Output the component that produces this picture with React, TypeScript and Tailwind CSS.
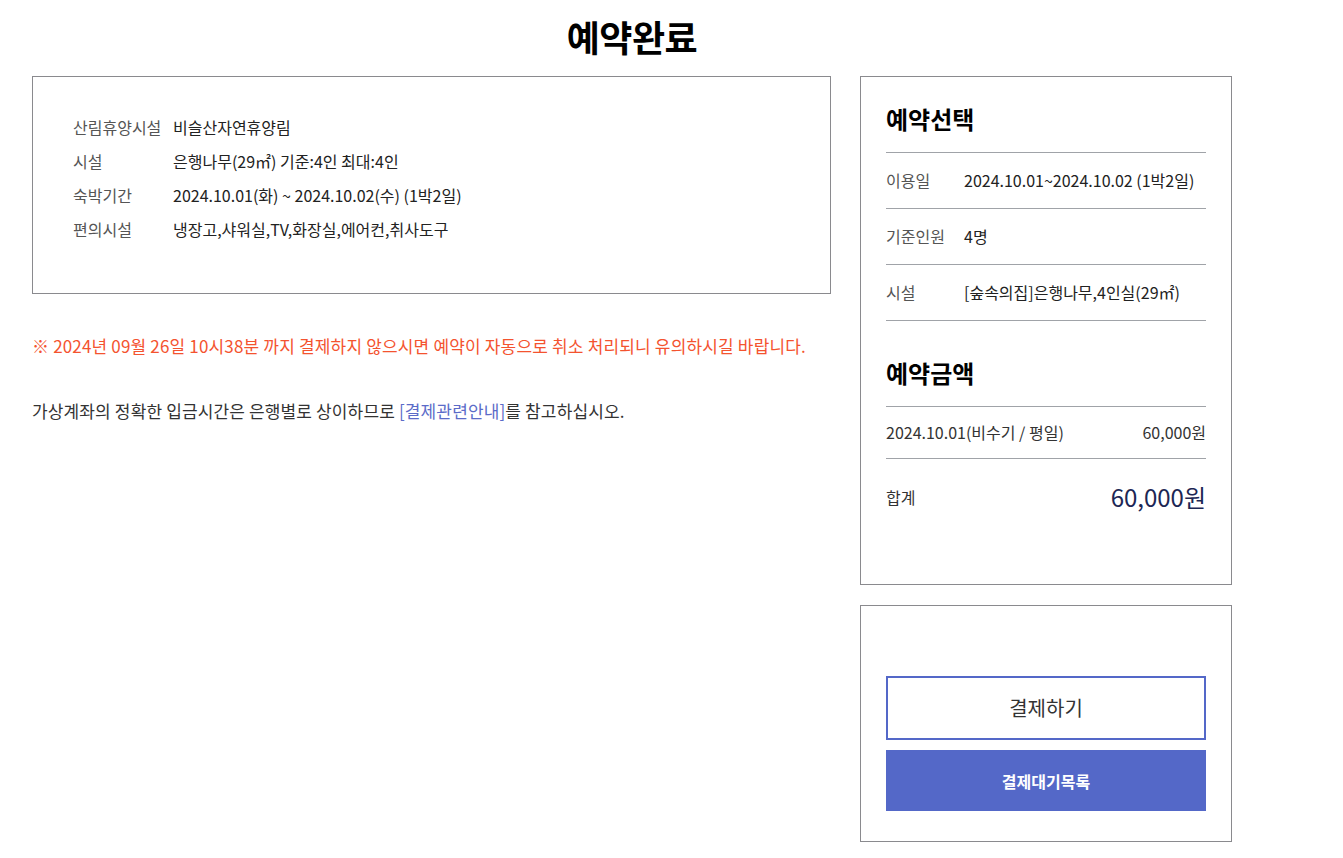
import React from "react";

const font = { fontFamily: '"Noto Sans CJK KR", "Noto Sans", sans-serif' };

export default function App() {
  return (
    <div className="min-h-[858px] bg-white text-[#222]" style={font}>
      <div className="w-[1200px] ml-[32px]">
        <h1 className="text-center text-[36px] font-bold text-black leading-none pt-[18px] pb-[22px] tracking-[-0.5px]">
          예약완료
        </h1>
        <div className="flex gap-[29px] items-start">
          {/* Left */}
          <div className="w-[799px]">
            <div className="border border-[#8a8a8e] h-[218px] pl-[40px] pt-[40px]">
              <div className="flex flex-col gap-[14px] text-[16px] leading-[20px]">
                <div className="flex">
                  <span className="w-[100px] text-[#555]">산림휴양시설</span>
                  <span className="text-[#222]">비슬산자연휴양림</span>
                </div>
                <div className="flex">
                  <span className="w-[100px] text-[#555]">시설</span>
                  <span className="text-[#222]">은행나무(29㎡) 기준:4인 최대:4인</span>
                </div>
                <div className="flex">
                  <span className="w-[100px] text-[#555]">숙박기간</span>
                  <span className="text-[#222]">2024.10.01(화) ~ 2024.10.02(수) (1박2일)</span>
                </div>
                <div className="flex">
                  <span className="w-[100px] text-[#555]">편의시설</span>
                  <span className="text-[#222]">냉장고,샤워실,TV,화장실,에어컨,취사도구</span>
                </div>
              </div>
            </div>
            <p className="mt-[40px] text-[17px] leading-[24px] tracking-[0.17px] text-[#f4532f]">
              ※ 2024년 09월 26일 10시38분 까지 결제하지 않으시면 예약이 자동으로 취소 처리되니 유의하시길 바랍니다.
            </p>
            <p className="mt-[41px] text-[17px] leading-[24px] tracking-[0.14px] text-[#333]">
              가상계좌의 정확한 입금시간은 은행별로 상이하므로{" "}
              <span className="text-[#5b6bc8]">[결제관련안내]</span>를 참고하십시오.
            </p>
          </div>

          {/* Right */}
          <div className="w-[372px] flex flex-col gap-[20px]">
            <div className="border border-[#8a8a8e] h-[509px] px-[25px] pt-[26px]">
              <h2 className="text-[24px] font-bold text-black leading-[32px] pb-[17px] border-b border-[#a0a3a8]">
                예약선택
              </h2>
              <div className="flex items-center h-[56px] pb-[2px] border-b border-[#a0a3a8] text-[16px]">
                <span className="w-[78px] text-[#555]">이용일</span>
                <span className="text-[#222]">2024.10.01~2024.10.02 (1박2일)</span>
              </div>
              <div className="flex items-center h-[56px] pb-[2px] border-b border-[#a0a3a8] text-[16px]">
                <span className="w-[78px] text-[#555]">기준인원</span>
                <span className="text-[#222]">4명</span>
              </div>
              <div className="flex items-center h-[56px] pb-[2px] border-b border-[#a0a3a8] text-[16px]">
                <span className="w-[78px] text-[#555]">시설</span>
                <span className="text-[#222]">[숲속의집]은행나무,4인실(29㎡)</span>
              </div>
              <h2 className="mt-[36px] text-[24px] font-bold text-black leading-[32px] pb-[17px] border-b border-[#a0a3a8]">
                예약금액
              </h2>
              <div className="flex items-center justify-between h-[52px] pb-[2px] border-b border-[#a0a3a8] text-[16px] text-[#333]">
                <span>2024.10.01(비수기 / 평일)</span>
                <span>60,000원</span>
              </div>
              <div className="flex items-center justify-between h-[76px]">
                <span className="text-[16px] text-[#333]">합계</span>
                <span className="text-[24px] text-[#1c2654]">60,000원</span>
              </div>
            </div>
            <div className="border border-[#8a8a8e] h-[237px] px-[25px] pt-[70px] flex flex-col gap-[10px]">
              <button className="h-[64px] w-full border-2 border-[#5468c8] bg-white text-[20px] text-[#333]">
                결제하기
              </button>
              <button className="h-[61px] w-full bg-[#5468c8] text-white text-[16px] font-bold">
                결제대기목록
              </button>
            </div>
          </div>
        </div>
      </div>
    </div>
  );
}
